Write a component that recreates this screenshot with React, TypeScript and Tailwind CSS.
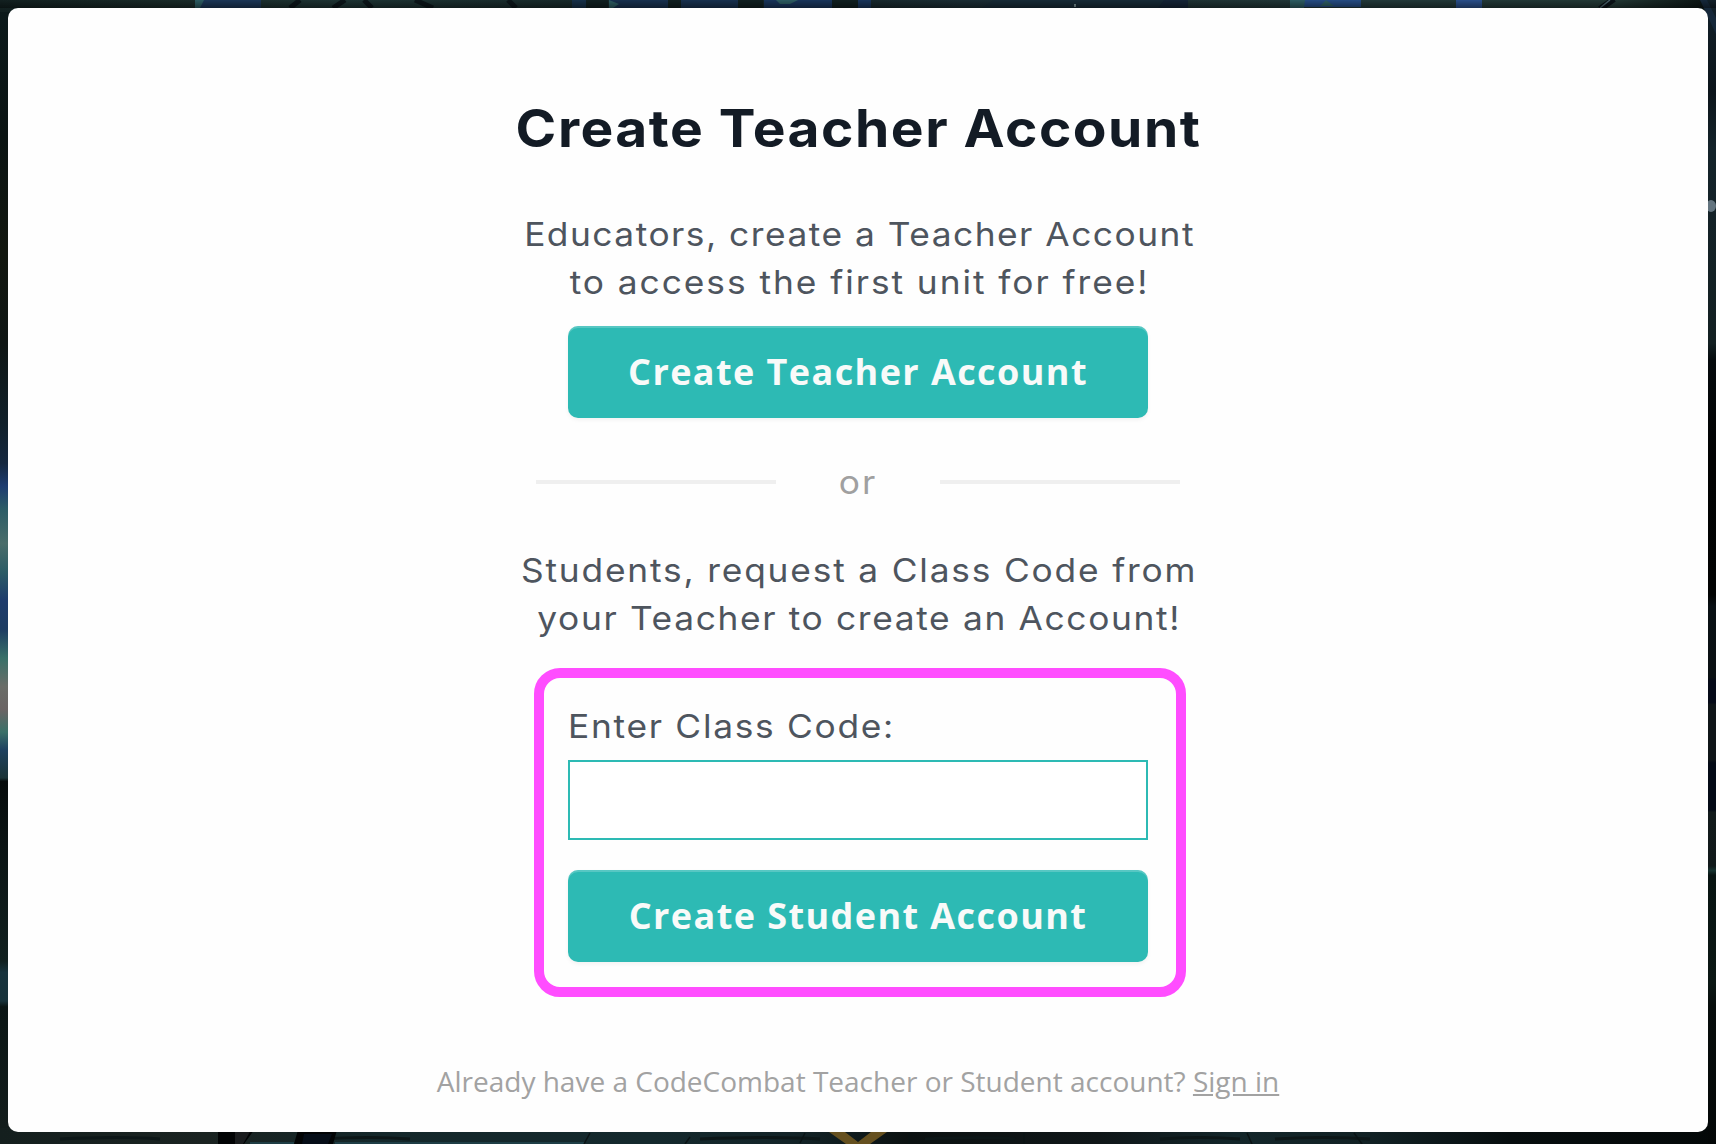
import React from "react";

function Backdrop() {
  return (
    <svg
      className="absolute inset-0 h-full w-full"
      viewBox="0 0 1716 1144"
      preserveAspectRatio="none"
      aria-hidden="true"
    >
      <defs>
        <linearGradient id="left" x1="0" y1="0" x2="0" y2="1144" gradientUnits="userSpaceOnUse">
          <stop offset="0" stopColor="#0c1a1b" />
          <stop offset="0.12" stopColor="#0b1413" />
          <stop offset="0.22" stopColor="#12170f" />
          <stop offset="0.3" stopColor="#0f1614" />
          <stop offset="0.37" stopColor="#11202a" />
          <stop offset="0.405" stopColor="#15283f" />
          <stop offset="0.425" stopColor="#1d3c70" />
          <stop offset="0.445" stopColor="#2c5c66" />
          <stop offset="0.475" stopColor="#4a6d6a" />
          <stop offset="0.5" stopColor="#2c5c66" />
          <stop offset="0.525" stopColor="#1e3c6c" />
          <stop offset="0.55" stopColor="#1d3c62" />
          <stop offset="0.575" stopColor="#387068" />
          <stop offset="0.6" stopColor="#6a6d68" />
          <stop offset="0.62" stopColor="#6b6464" />
          <stop offset="0.64" stopColor="#3a7068" />
          <stop offset="0.655" stopColor="#1f4260" />
          <stop offset="0.68" stopColor="#1b3437" />
          <stop offset="0.683" stopColor="#060b0b" />
          <stop offset="0.74" stopColor="#0b1414" />
          <stop offset="0.84" stopColor="#11201f" />
          <stop offset="0.85" stopColor="#17333c" />
          <stop offset="0.875" stopColor="#17323a" />
          <stop offset="0.88" stopColor="#0b1615" />
          <stop offset="1" stopColor="#141e1d" />
        </linearGradient>
        <linearGradient id="right" x1="0" y1="0" x2="0" y2="1144" gradientUnits="userSpaceOnUse">
          <stop offset="0" stopColor="#122029" />
          <stop offset="0.08" stopColor="#0c151b" />
          <stop offset="0.13" stopColor="#14232a" />
          <stop offset="0.3" stopColor="#132022" />
          <stop offset="0.315" stopColor="#050a0d" />
          <stop offset="0.4" stopColor="#010202" />
          <stop offset="0.52" stopColor="#020303" />
          <stop offset="0.53" stopColor="#091014" />
          <stop offset="0.592" stopColor="#0a1013" />
          <stop offset="0.595" stopColor="#050a18" />
          <stop offset="0.614" stopColor="#050a18" />
          <stop offset="0.616" stopColor="#0f1518" />
          <stop offset="0.664" stopColor="#0f1518" />
          <stop offset="0.667" stopColor="#040a16" />
          <stop offset="0.708" stopColor="#040a16" />
          <stop offset="0.71" stopColor="#121a1b" />
          <stop offset="0.757" stopColor="#11191a" />
          <stop offset="0.761" stopColor="#173330" />
          <stop offset="0.765" stopColor="#081412" />
          <stop offset="0.86" stopColor="#0b1714" />
          <stop offset="0.88" stopColor="#070d0c" />
          <stop offset="1" stopColor="#030707" />
        </linearGradient>
        <linearGradient id="top" x1="0" y1="0" x2="1716" y2="0" gradientUnits="userSpaceOnUse">
          <stop offset="0" stopColor="#122020" />
          <stop offset="0.1" stopColor="#192a28" />
          <stop offset="0.2" stopColor="#1d3333" />
          <stop offset="0.35" stopColor="#162728" />
          <stop offset="0.48" stopColor="#152528" />
          <stop offset="0.56" stopColor="#1a2c33" />
          <stop offset="0.62" stopColor="#192c36" />
          <stop offset="0.69" stopColor="#1e3233" />
          <stop offset="0.8" stopColor="#223839" />
          <stop offset="0.94" stopColor="#223734" />
          <stop offset="1" stopColor="#08100f" />
        </linearGradient>
        <linearGradient id="bottom" x1="0" y1="0" x2="1716" y2="0" gradientUnits="userSpaceOnUse">
          <stop offset="0" stopColor="#141f1e" />
          <stop offset="0.12" stopColor="#1a2321" />
          <stop offset="0.22" stopColor="#14272a" />
          <stop offset="0.38" stopColor="#14292d" />
          <stop offset="0.46" stopColor="#132428" />
          <stop offset="0.53" stopColor="#0b1111" />
          <stop offset="0.64" stopColor="#0f1618" />
          <stop offset="0.72" stopColor="#13262a" />
          <stop offset="0.8" stopColor="#112124" />
          <stop offset="0.88" stopColor="#060d0e" />
          <stop offset="1" stopColor="#030808" />
        </linearGradient>
        <linearGradient id="shade" x1="0" y1="0" x2="0" y2="8" gradientUnits="userSpaceOnUse">
          <stop offset="0" stopColor="#000" stopOpacity="0" />
          <stop offset="1" stopColor="#000" stopOpacity="0.4" />
        </linearGradient>
      </defs>

      <rect width="1716" height="1144" fill="#0b1414" />
      <rect width="20" height="1144" fill="url(#left)" />
      <rect x="1700" width="16" height="1144" fill="url(#right)" />
      <ellipse cx="1711" cy="206" rx="5" ry="6" fill="#63747f" />

      <rect width="1706" height="12" fill="url(#top)" />
      <g fill="#1b3656">
        <rect x="195" width="66" height="8" />
        <rect x="572" width="14" height="8" fill="#163048" />
        <rect x="609" width="59" height="8" fill="#17304e" />
        <rect x="681" width="57" height="8" fill="#17304e" />
        <rect x="764" width="68" height="8" fill="#18345a" />
        <rect x="858" width="13" height="8" fill="#18345a" />
        <rect x="1290" width="71" height="7" fill="#244b82" />
        <rect x="1456" width="26" height="8" fill="#294e88" />
        <rect x="1144" width="44" height="8" fill="#142436" />
      </g>
      <path d="M195 0h9l-4 8h-5zM609 0l10 4-6 4h-4zM776 0h22l-8 4h-10zM1290 0h15l-1 8h-14zM1320 6l6-6 8 6z" fill="#2c5b61" />
      <path d="M586 0h22v8h-22zM668 0h13v8h-13zM738 0h25v8h-25zM832 0h26v8h-26z" fill="#101f20" />
      <path d="M300 0l-10 8M345 0l-12 8M364 0l8 8M415 0l18 8M508 0l8 8" stroke="#0b1519" strokeWidth="5" />
      <path d="M982 8l12-8h170l-6 8z" fill="#172a36" />
      <rect x="1074" y="4" width="2" height="3" fill="#71878b" />
      <path d="M1600 9l14-10" stroke="#0a1217" strokeWidth="6" />
      <path d="M1600 8l10-8" stroke="#48616a" strokeWidth="1.5" />
      <path d="M1700 0h7l9 18v16z" fill="#16283a" />
      <rect width="1716" height="8" fill="url(#shade)" />

      <rect y="1128" width="1708" height="16" fill="url(#bottom)" />
      <path d="M60 1139q60-3 100 0M320 1139q50-3 90 0M700 1139q70-3 120 0M925 1139q60-3 90 0M1160 1139q40-3 80 0M1275 1139q50-3 95 0" stroke="#0c1617" strokeWidth="3" fill="none" />
      <path d="M250 1143h44M335 1143h250" stroke="#22464f" strokeWidth="1.5" />
      <path d="M690 1137l-5 7M590 1133l-6 11M805 1133l-5 10M909 1133v11M1024 1133v11M1247 1133l5 11M1354 1133l8 11" stroke="#0a1314" strokeWidth="1.5" />
      <path d="M218 1130h36l-10 14h-26zM298 1130h39l-4 14h-39z" fill="#010304" />
      <path d="M235 1130h16l-8 14h-8z" fill="#1a1c1e" />
      <path d="M304 1134h28l-4 10h-26z" fill="#050d17" />
      <path d="M829 1132h16l13 10 13-10h16l-17 12h-24z" fill="#65501f" />
    </svg>
  );
}

function ActionButton({ children }: { children: React.ReactNode }) {
  return (
    <button
      type="button"
      className="flex h-[92px] w-[580px] items-center justify-center rounded-[10px] bg-[#2dbab4] font-['Open_Sans',sans-serif] text-4xl font-bold tracking-[1.42px] text-[#f8faf9] shadow-[inset_0_2px_0_rgba(255,255,255,0.2),0_2px_4px_rgba(0,0,0,0.05)]"
    >
      {children}
    </button>
  );
}

export default function App() {
  return (
    <div className="relative h-[1144px] w-[1716px] overflow-hidden px-2 pt-2 pb-3 font-['Inter',sans-serif]">
      <Backdrop />
      <main className="relative flex h-[1124px] w-[1700px] flex-col items-center rounded-[10px] bg-[#fefefe] pt-[91px]">
        <h1 className="scale-x-[1.06] pl-px text-[52px] leading-[60px] font-bold tracking-[1.4px] whitespace-nowrap text-[#131b25]">
          Create Teacher Account
        </h1>

        <p className="mt-[51px] flex scale-x-[1.07] flex-col items-center pl-0.5 text-[33px] leading-[48px] whitespace-nowrap text-[#4e555e]">
          <span className="tracking-[1.4px]">Educators, create a Teacher Account</span>
          <span className="tracking-[1.82px]">to access the first unit for free!</span>
        </p>
        <div className="mt-5">
          <ActionButton>Create Teacher Account</ActionButton>
        </div>

        <div className="mt-10 flex h-12 w-[644px] items-center justify-between">
          <span className="h-1 w-60 bg-[#efefef]" />
          <span className="scale-x-[1.07] pl-px text-[33px] leading-[48px] tracking-[2px] text-[#a0a0a0]">or</span>
          <span className="h-1 w-60 bg-[#efefef]" />
        </div>

        <p className="mt-10 flex scale-x-[1.07] flex-col items-center pl-0.5 text-[33px] leading-[48px] whitespace-nowrap text-[#4e555e]">
          <span className="tracking-[1.7px]">Students, request a Class Code from</span>
          <span className="tracking-[1.54px]">your Teacher to create an Account!</span>
        </p>

        <form className="mt-[26px] ml-1 flex h-[329px] w-[652px] flex-col rounded-[26px] border-[10px] border-[#ff4dff] pt-6 pl-6">
          <label
            htmlFor="class-code"
            className="origin-left scale-x-[1.07] text-[33px] leading-[48px] tracking-[1.6px] text-[#4e555e]"
          >
            Enter Class Code:
          </label>
          <input
            id="class-code"
            type="text"
            className="mt-2.5 h-20 w-[580px] shrink-0 border-2 border-[#2dbab4] bg-white px-4 text-3xl outline-none"
          />
          <div className="mt-[30px]">
            <ActionButton>Create Student Account</ActionButton>
          </div>
        </form>

        <p className="mt-16 font-['Open_Sans',sans-serif] text-[28px] leading-10 whitespace-nowrap text-[#a2a2a2]">
          Already have a CodeCombat Teacher or Student account?{" "}
          <a href="#" className="underline">
            Sign in
          </a>
        </p>
      </main>
    </div>
  );
}
